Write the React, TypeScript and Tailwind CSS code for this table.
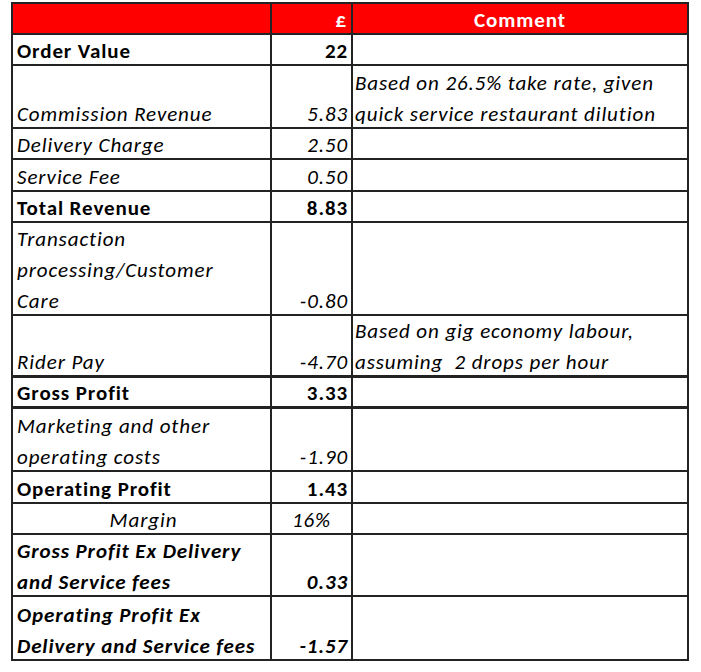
import type { ReactNode } from "react"

type Row = {
  label: ReactNode
  value?: string
  comment?: ReactNode
  h: string
  style: "bold" | "italic" | "boldItalic"
  line?: "thin" | "thick"
  center?: boolean
}

const rows: Row[] = [
  { label: "Order Value", value: "22", h: "h-[31px]", style: "bold" },
  {
    label: "Commission Revenue",
    value: "5.83",
    comment: (
      <>
        Based on 26.5% take rate, given
        <br />
        quick service restaurant dilution
      </>
    ),
    h: "h-[63px]",
    style: "italic",
  },
  { label: "Delivery Charge", value: "2.50", h: "h-[31px]", style: "italic" },
  { label: "Service Fee", value: "0.50", h: "h-[32px]", style: "italic" },
  { label: "Total Revenue", value: "8.83", h: "h-[31px]", style: "bold" },
  {
    label: (
      <>
        Transaction
        <br />
        processing/Customer
        <br />
        Care
      </>
    ),
    value: "-0.80",
    h: "h-[93px]",
    style: "italic",
  },
  {
    label: "Rider Pay",
    value: "-4.70",
    comment: (
      <>
        Based on gig economy labour,
        <br />
        assuming&nbsp; 2 drops per hour
      </>
    ),
    h: "h-[62px]",
    style: "italic",
    line: "thick",
  },
  { label: "Gross Profit", value: "3.33", h: "h-[31px]", style: "bold", line: "thick" },
  {
    label: (
      <>
        Marketing and other
        <br />
        operating costs
      </>
    ),
    value: "-1.90",
    h: "h-[63px]",
    style: "italic",
  },
  { label: "Operating Profit", value: "1.43", h: "h-[32px]", style: "bold" },
  { label: "Margin", value: "16%", h: "h-[31px]", style: "italic", center: true },
  {
    label: (
      <>
        Gross Profit Ex Delivery
        <br />
        and Service fees
      </>
    ),
    value: "0.33",
    h: "h-[62px]",
    style: "boldItalic",
  },
  {
    label: (
      <>
        Operating Profit Ex
        <br />
        Delivery and Service fees
      </>
    ),
    value: "-1.57",
    h: "h-[62px]",
    style: "boldItalic",
  },
]

const styleClass = {
  bold: "font-bold",
  italic: "italic",
  boldItalic: "font-bold italic",
}

export default function App() {
  return (
    <div
      className="min-h-screen bg-white pt-[2px] pl-[11px] text-[21px] leading-[31px] tracking-[0.9px] text-black"
      style={{ fontFamily: "Carlito, Lato, 'Noto Sans', sans-serif" }}
    >
      <div className="flex w-[678px] flex-col border-2 border-[#232323]">
        <div className="flex h-[31px] border-b-2 border-[#232323] bg-[#ff0000] font-bold text-white">
          <div className="w-[259px] shrink-0 border-r-2 border-[#232323]" />
          <div className="flex w-[81px] shrink-0 items-end justify-end border-r-2 border-[#232323] pr-[4px]">
            <span className="mb-[-3px]">£</span>
          </div>
          <div className="flex flex-1 items-end justify-center">
            <span className="mb-[-3px]">Comment</span>
          </div>
        </div>
        {rows.map((r, i) => {
          const last = i === rows.length - 1
          const border = last
            ? ""
            : r.line === "thick"
              ? "border-b-[3px] border-[#232323]"
              : "border-b-2 border-[#232323]"
          return (
            <div key={i} className={`flex ${r.h} ${border}`}>
              <div
                className={`flex w-[259px] shrink-0 items-end border-r-2 border-[#232323] pl-[4px] ${styleClass[r.style]} ${r.center ? "justify-center" : ""}`}
              >
                <span className="mb-[-3px] whitespace-nowrap">{r.label}</span>
              </div>
              <div
                className={`flex w-[81px] shrink-0 items-end border-r-2 border-[#232323] ${styleClass[r.style]} ${r.center ? "justify-center" : "justify-end pr-[3px]"}`}
              >
                <span className="mb-[-3px]">{r.value}</span>
              </div>
              <div className="flex flex-1 items-end pl-[2px] italic">
                <span className="mb-[-3px] whitespace-nowrap">{r.comment}</span>
              </div>
            </div>
          )
        })}
      </div>
    </div>
  )
}
